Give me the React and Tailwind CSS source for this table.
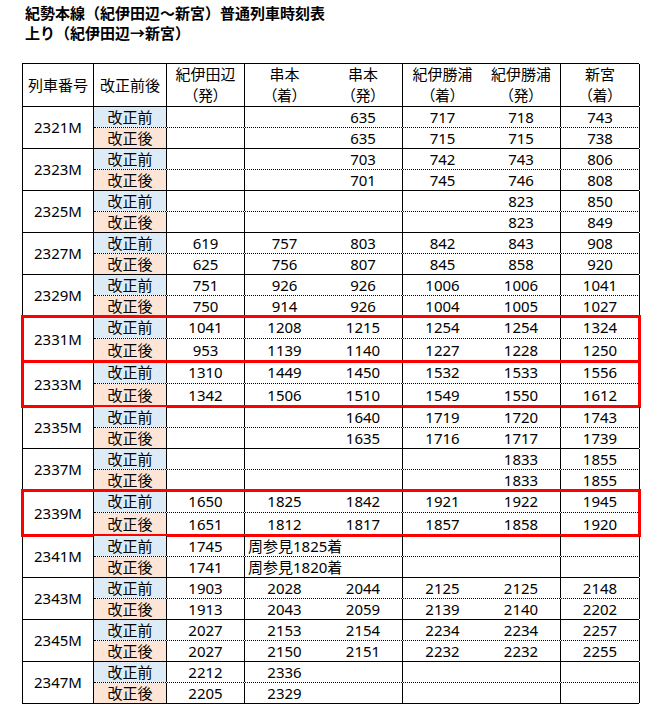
import React from 'react';

const cols = [
  { name: '紀伊田辺', kind: '（発）', w: 'w-[78px]', line: true },
  { name: '串本', kind: '（着）', w: 'w-[79px]', line: false },
  { name: '串本', kind: '（発）', w: 'w-[79px]', line: true },
  { name: '紀伊勝浦', kind: '（着）', w: 'w-[79px]', line: false },
  { name: '紀伊勝浦', kind: '（発）', w: 'w-[79px]', line: true },
  { name: '新宮', kind: '（着）', w: 'w-[79px]', line: true },
];

const trains = [
  { no: '2321M', before: ['', '', '635', '717', '718', '743'], after: ['', '', '635', '715', '715', '738'] },
  { no: '2323M', before: ['', '', '703', '742', '743', '806'], after: ['', '', '701', '745', '746', '808'] },
  { no: '2325M', before: ['', '', '', '', '823', '850'], after: ['', '', '', '', '823', '849'] },
  { no: '2327M', before: ['619', '757', '803', '842', '843', '908'], after: ['625', '756', '807', '845', '858', '920'] },
  { no: '2329M', before: ['751', '926', '926', '1006', '1006', '1041'], after: ['750', '914', '926', '1004', '1005', '1027'] },
  { no: '2331M', red: true, before: ['1041', '1208', '1215', '1254', '1254', '1324'], after: ['953', '1139', '1140', '1227', '1228', '1250'] },
  { no: '2333M', red: true, before: ['1310', '1449', '1450', '1532', '1533', '1556'], after: ['1342', '1506', '1510', '1549', '1550', '1612'] },
  { no: '2335M', before: ['', '', '1640', '1719', '1720', '1743'], after: ['', '', '1635', '1716', '1717', '1739'] },
  { no: '2337M', before: ['', '', '', '', '1833', '1855'], after: ['', '', '', '', '1833', '1855'] },
  { no: '2339M', red: true, before: ['1650', '1825', '1842', '1921', '1922', '1945'], after: ['1651', '1812', '1817', '1857', '1858', '1920'] },
  { no: '2341M', before: ['1745', '', '', '', '', ''], after: ['1741', '', '', '', '', ''], note: ['周参見1825着', '周参見1820着'] },
  { no: '2343M', before: ['1903', '2028', '2044', '2125', '2125', '2148'], after: ['1913', '2043', '2059', '2139', '2140', '2202'] },
  { no: '2345M', before: ['2027', '2153', '2154', '2234', '2234', '2257'], after: ['2027', '2150', '2151', '2232', '2232', '2255'] },
  { no: '2347M', before: ['2212', '2336', '', '', '', ''], after: ['2205', '2329', '', '', '', ''] },
];

function SubRow({ label, values, note, first, red }) {
  const h = red ? 'h-[22px]' : first ? 'h-[21px]' : 'h-[20px]';
  return (
    <div className={`flex ${h} ${first ? 'border-b border-dotted border-black' : ''}`}>
      <div className={`w-[73px] shrink-0 border-r border-black flex items-center justify-center ${first ? 'bg-[#ddebf7]' : 'bg-[#fce4d6]'}`}>
        {label}
      </div>
      {cols.map((c, i) => (
        <div
          key={i}
          className={`${c.w} shrink-0 flex items-center ${c.line ? 'border-r border-black' : ''} ${note && i === 1 ? 'justify-start pl-[3px] whitespace-nowrap overflow-visible' : 'justify-center'}`}
        >
          {note && i === 1 ? note : values[i]}
        </div>
      ))}
    </div>
  );
}

export default function App() {
  return (
    <div
      className="bg-white text-black min-h-[725px] pl-[22px] pt-[3px] text-[15px]"
      style={{ fontFamily: '"Noto Sans", "Noto Sans CJK JP", sans-serif' }}
    >
      <div className="pl-[3px] font-bold leading-[20px]" style={{ fontFamily: '"Noto Sans CJK JP", sans-serif' }}>
        <div>紀勢本線（紀伊田辺～新宮）普通列車時刻表</div>
        <div>上り（紀伊田辺→新宮）</div>
      </div>

      <div className="mt-[20px] w-[617px] border-l border-t border-black leading-none [font-feature-settings:'palt']">
        {/* header */}
        <div className="flex h-[43px] border-b border-black">
          <div className="w-[71px] shrink-0 border-r border-black flex items-center justify-center">列車番号</div>
          <div className="w-[73px] shrink-0 border-r border-black flex items-center justify-center">改正前後</div>
          {cols.map((c, i) => (
            <div
              key={i}
              className={`${c.w} shrink-0 flex flex-col items-center justify-center gap-[6px] ${c.line ? 'border-r border-black' : ''}`}
            >
              <span>{c.name}</span>
              <span>{c.kind}</span>
            </div>
          ))}
        </div>

        {trains.map((t) => (
          <div key={t.no} className="relative flex border-b border-black">
            <div className="w-[71px] shrink-0 border-r border-black flex items-center justify-center">{t.no}</div>
            <div className="flex flex-col">
              <SubRow label="改正前" values={t.before} note={t.note && t.note[0]} first red={t.red} />
              <SubRow label="改正後" values={t.after} note={t.note && t.note[1]} red={t.red} />
            </div>
            {t.red && (
              <div className="absolute -left-[2px] -right-[2px] -top-[2px] -bottom-[2px] border-[3px] border-[#ff0000] pointer-events-none" />
            )}
          </div>
        ))}
      </div>
    </div>
  );
}
